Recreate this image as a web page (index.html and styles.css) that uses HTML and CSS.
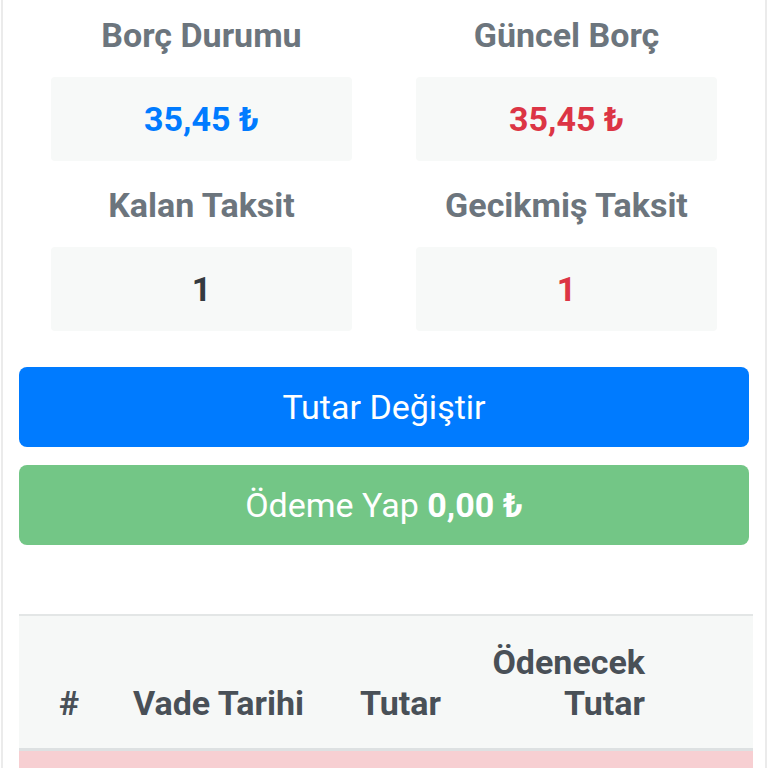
FILE: index.html
```html
<!DOCTYPE html>
<html lang="tr">

<head>
  <meta charset="UTF-8">
  <meta name="viewport" content="width=device-width, initial-scale=1.0">
  <title>Borç Detayı</title>
  <link rel="stylesheet" href="styles.css">
</head>

<body>
  <div class="page">
    <div class="stats">
      <div class="stat">
        <h5>Borç Durumu</h5>
        <div class="box blue">35,45 ₺</div>
      </div>
      <div class="stat">
        <h5>Güncel Borç</h5>
        <div class="box red">35,45 ₺</div>
      </div>
      <div class="stat">
        <h5>Kalan Taksit</h5>
        <div class="box dark">1</div>
      </div>
      <div class="stat">
        <h5>Gecikmiş Taksit</h5>
        <div class="box red">1</div>
      </div>
    </div>

    <button class="btn btn-primary">Tutar Değiştir</button>
    <button class="btn btn-success" disabled>Ödeme Yap <b>0,00 ₺</b></button>

    <table>
      <thead>
        <tr>
          <th class="c-no">#</th>
          <th class="c-date">Vade Tarihi</th>
          <th class="c-amount">Tutar</th>
          <th class="c-pay">Ödenecek<br>Tutar</th>
        </tr>
      </thead>
      <tbody>
        <tr class="danger">
          <td class="c-no"></td>
          <td class="c-date"></td>
          <td class="c-amount"></td>
          <td class="c-pay"></td>
        </tr>
      </tbody>
    </table>
  </div>
</body>

</html>
```

FILE: styles.css
```css
body {
  margin: 0;
  font-family: Roboto, "Liberation Sans", sans-serif;
  background: #fff;
  overflow: hidden;
}

.page {
  margin-left: 1px;
  width: 730px;
  padding: 15px 16px 0 16px;
  border-left: 2px solid #ebebeb;
  border-right: 2px solid #ebebeb;
  min-height: 768px;
}

.stats {
  display: grid;
  grid-template-columns: 1fr 1fr;
}

.stat {
  padding: 0 32px;
  margin-bottom: 24px;
  text-align: center;
}

.stat h5 {
  margin: 0 0 22px;
  font-size: 34px;
  line-height: 40px;
  font-weight: 700;
  color: #6c757d;
}

.box {
  height: 84px;
  display: flex;
  align-items: center;
  justify-content: center;
  background: #f7f9f8;
  border-radius: 4px;
  font-size: 34px;
  font-weight: 700;
}

.blue {
  color: #007bff;
}

.red {
  color: #dc3545;
}

.dark {
  color: #343a40;
}

.btn {
  display: block;
  width: 100%;
  height: 80px;
  border: 0;
  border-radius: 8px;
  color: #fff;
  font-family: inherit;
  font-size: 34px;
  font-weight: 400;
}

.btn-primary {
  margin-top: 12px;
  background: #007bff;
}

.btn-success {
  margin-top: 18px;
  background: #73c686;
}

.btn b {
  font-weight: 700;
}

table {
  margin-top: 69px;
  width: 734px;
  border-collapse: collapse;
  table-layout: fixed;
  color: #495057;
}

th {
  padding: 26px 0 24px;
  background: #f6f8f7;
  border-top: 2px solid #e3e6e6;
  border-bottom: 3px solid #dde1e2;
  font-size: 34px;
  line-height: 41px;
  font-weight: 700;
  text-align: left;
  vertical-align: bottom;
}

td {
  height: 60px;
  padding: 0;
}

.c-no {
  width: 74px;
  padding-left: 40px;
}

.c-date {
  width: 227px;
}

.c-amount {
  width: 132px;
}

.c-pay {
  width: 153px;
  padding-right: 108px;
  text-align: right;
}

tbody tr.danger {
  background: #f7cfd2;
}
```
